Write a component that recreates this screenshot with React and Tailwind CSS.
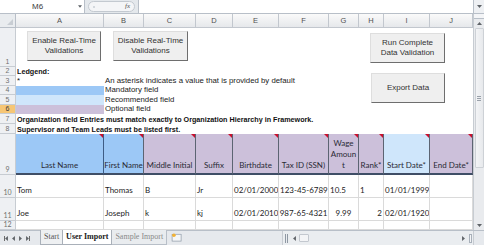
import React from 'react';

// ── Data ─────────────────────────────────────────────────

const LETTERS = [
  { l: 'A', w: 'w-[88px]' },
  { l: 'B', w: 'w-[40px]' },
  { l: 'C', w: 'w-[52px]' },
  { l: 'D', w: 'w-[37px]' },
  { l: 'E', w: 'w-[46px]' },
  { l: 'F', w: 'w-[50px]' },
  { l: 'G', w: 'w-[30px]' },
  { l: 'H', w: 'w-[25px]' },
  { l: 'I', w: 'w-[46px]' },
  { l: 'J', w: 'w-[43px]' },
];

const BLUE = 'bg-[#9cc8f6]';
const LIGHT = 'bg-[#cfe6fb]';
const LAV = 'bg-[#ccc0da]';

const HEADERS = [
  { label: 'Last Name', bg: BLUE, line: 'border-[#3e5c85]' },
  { label: 'First Name', bg: BLUE },
  { label: 'Middle Initial', bg: LAV },
  { label: 'Suffix', bg: LAV },
  { label: 'Birthdate', bg: LAV },
  { label: 'Tax ID (SSN)', bg: LAV },
  { label: 'Wage', bg: LAV, wrap: true },
  { label: 'Rank*', bg: LAV },
  { label: 'Start Date*', bg: LIGHT },
  { label: 'End Date*', bg: LAV },
];

const ROWS = [
  {
    n: 10,
    h: 'h-[23px]',
    cells: [
      ['Tom'], ['Thomas'], ['B'], ['Jr'], ['02/01/2000'], ['123-45-6789'],
      ['10.5'], ['1'], ['01/01/1999'], [''],
    ],
  },
  {
    n: 11,
    h: 'h-[23px]',
    cells: [
      ['Joe'], ['Joseph'], ['k'], ['kj'], ['02/01/2010'], ['987-65-4321', 'justify-center'],
      ['9.99', 'justify-center'], ['2', 'justify-end'], ['02/01/1920'], [''],
    ],
  },
  { n: 12, h: 'h-[9px]', cells: LETTERS.map(() => ['']) },
];

// ── Pieces ───────────────────────────────────────────────

function RowHead({ n, active }) {
  return (
    <div
      className={`w-[16px] shrink-0 flex items-end justify-center pb-[1px] text-[7px] leading-none border-r border-b border-[#c7ccd2] ${
        active ? 'bg-[#f6c675] text-[#3a3a3a]' : 'bg-[#eef0f3] text-[#707070]'
      }`}
    >
      {n}
    </div>
  );
}

function SheetButton({ className, children }) {
  return (
    <button
      className={`absolute flex items-center justify-center text-center text-[8px] leading-[10px] text-[#333] bg-[#efefef] border border-t-[#dedede] border-l-[#dedede] border-r-[#6e6e6e] border-b-[#6e6e6e] ${className}`}
    >
      {children}
    </button>
  );
}

function Tri({ dir = 'down', className = '' }) {
  const pts = {
    down: '0,0 6,0 3,3.5',
    up: '0,3.5 6,3.5 3,0',
    left: '3.5,0 3.5,6 0,3',
    right: '0,0 0,6 3.5,3',
  }[dir];
  const box = dir === 'down' || dir === 'up' ? '0 0 6 3.5' : '0 0 3.5 6';
  return (
    <svg viewBox={box} className={className}>
      <polygon points={pts} fill="#5f6368" />
    </svg>
  );
}

function FormulaBar() {
  return (
    <div className="flex h-[14px] bg-[#e4e8ec] border-b border-[#b8bfc8]">
      <div className="w-[85px] bg-white border-r border-[#b8bfc8] flex items-center">
        <span className="pl-[32px] text-[8px] text-[#3c3c3c]">M6</span>
        <Tri className="ml-auto mr-[2px] w-[4px] h-[3px]" />
      </div>
      <div className="w-[53px] flex items-center pl-[3px]">
        <div className="h-[11px] w-[47px] rounded-full bg-[#f4f5f7] border border-[#c3c9d0] flex items-center justify-between px-[4px]">
          <span className="w-[2px] h-[2px] rounded-full bg-[#c9ced4]" />
          <span className="text-[7px] italic font-['Liberation_Serif',serif] text-[#555]">fx</span>
        </div>
      </div>
      <div className="flex-1 bg-white border-l border-[#b8bfc8]" />
      <div className="w-[11px] bg-[#eef0f3] border-l border-[#b8bfc8] flex items-center justify-center">
        <Tri className="w-[5px] h-[3px]" />
      </div>
    </div>
  );
}

function ColumnHeads() {
  return (
    <div className="flex h-[14px]">
      <div className="w-[16px] shrink-0 bg-[#e9ecef] border-r border-b border-[#b8bfc8] flex items-end justify-end p-[2px]">
        <svg viewBox="0 0 6 6" className="w-[6px] h-[6px]">
          <polygon points="6,0 6,6 0,6" fill="#c8cdd3" />
        </svg>
      </div>
      {LETTERS.map((c) => (
        <div
          key={c.l}
          className={`${c.w} shrink-0 flex items-center justify-center text-[7.5px] text-[#505050] bg-gradient-to-b from-[#fafafa] to-[#e6e8eb] border-r border-b border-[#c2c7ce]`}
        >
          {c.l}
        </div>
      ))}
    </div>
  );
}

function TextRow({ n, h, active, a, aBg, rest, bold }) {
  return (
    <div className={`flex ${h}`}>
      <RowHead n={n} active={active} />
      <div className={`w-[88px] shrink-0 flex items-end pb-[1px] pl-[1px] ${aBg || ''}`}>
        {a && (
          <span
            className={`leading-none whitespace-nowrap text-[#111] ${bold ? 'font-bold text-[7.2px]' : 'text-[7.8px]'}`}
          >
            {a}
          </span>
        )}
      </div>
      <div className="flex-1 flex items-end pb-[1px] pl-[1px]">
        {rest && <span className="text-[7.8px] leading-none whitespace-nowrap text-[#222]">{rest}</span>}
      </div>
    </div>
  );
}

function HeaderRow() {
  return (
    <div className="flex h-[41px] font-['Lato',sans-serif]">
      <RowHead n={9} />
      {HEADERS.map((hd, i) => (
        <div
          key={hd.label}
          className={`${LETTERS[i].w} ${hd.bg} relative shrink-0 flex items-end justify-center text-center pb-[2px] text-[8px] leading-[11px] text-[#2a2a35] whitespace-nowrap overflow-hidden border-r ${hd.line || 'border-[#5c6472]'} border-b-2 border-b-[#3f4e66]`}
        >
          {hd.wrap ? (
            <span>
              Wage
              <br />
              Amoun
              <br />t
            </span>
          ) : (
            hd.label
          )}
          <span className="absolute top-0 right-0 w-0 h-0 border-l-[4px] border-l-transparent border-t-[4px] border-t-[#c8102e]" />
        </div>
      ))}
    </div>
  );
}

function DataRow({ row }) {
  return (
    <div className={`flex ${row.h} font-['Lato',sans-serif]`}>
      <RowHead n={row.n} />
      {row.cells.map(([v, align], i) => (
        <div
          key={i}
          className={`${LETTERS[i].w} shrink-0 flex items-end ${align || 'justify-start'} px-[1px] pb-[3px] text-[8px] leading-none whitespace-nowrap overflow-hidden text-[#1c1c1c] border-r border-b border-[#dadada]`}
        >
          {v}
        </div>
      ))}
    </div>
  );
}

function VScroll() {
  return (
    <div className="w-[11px] shrink-0 bg-[#e9ebee] border-l border-[#c7ccd2] flex flex-col items-center">
      <div className="w-full h-[5px] border-b border-[#b8bfc8] bg-[#f4f5f7]" />
      <div className="h-[9px] flex items-center">
        <Tri dir="up" className="w-[5px] h-[3px]" />
      </div>
      <div className="w-[9px] h-[140px] bg-gradient-to-r from-[#f3f4f6] to-[#e7e9ec] border border-[#cdd1d6] rounded-[1px] flex items-center justify-center">
        <div className="flex flex-col gap-[1px]">
          <span className="w-[4px] h-[1px] bg-[#9aa1aa]" />
          <span className="w-[4px] h-[1px] bg-[#9aa1aa]" />
          <span className="w-[4px] h-[1px] bg-[#9aa1aa]" />
        </div>
      </div>
      <div className="flex-1" />
      <div className="h-[9px] flex items-center">
        <Tri className="w-[5px] h-[3px]" />
      </div>
    </div>
  );
}

function TabBar() {
  return (
    <div className="flex h-[15px] bg-[#e6e9ed] border-t border-[#b8bfc8] font-['Liberation_Serif',serif]">
      {/* Navegación */}
      <div className="w-[40px] shrink-0 flex items-center gap-[4px] pl-[4px]">
        <span className="flex items-center">
          <span className="w-[1px] h-[5px] bg-[#6b6b6b]" />
          <Tri dir="left" className="w-[3px] h-[5px]" />
        </span>
        <Tri dir="left" className="w-[3px] h-[5px]" />
        <Tri dir="right" className="w-[3px] h-[5px]" />
        <span className="flex items-center">
          <Tri dir="right" className="w-[3px] h-[5px]" />
          <span className="w-[1px] h-[5px] bg-[#6b6b6b]" />
        </span>
      </div>

      {/* Hojas */}
      <div className="flex items-stretch -mt-[1px]">
        <div className="px-[3px] flex items-center text-[8px] text-[#555] bg-[#eef0f2] border-x border-b border-[#a9b0b9]">
          Start
        </div>
        <div className="px-[3px] flex items-center text-[8px] font-bold text-[#1a1a1a] bg-white border-r border-b border-[#a9b0b9]">
          User Import
        </div>
        <div className="px-[3px] flex items-center text-[8px] text-[#8a8a8a] bg-[#e9ecef] border-r border-b border-[#b8bfc8]">
          Sample Import
        </div>
        <div className="w-[20px] flex items-center justify-center">
          <svg viewBox="0 0 14 10" className="w-[13px] h-[9px]">
            <rect x="1" y="1.5" width="10" height="7.5" fill="#f4f6f8" stroke="#8f9aa6" strokeWidth="0.8" />
            <path d="M3 1.5 L11 1.5" stroke="#b7c2cd" strokeWidth="0.8" />
            <circle cx="3" cy="2.5" r="2" fill="#f2b234" />
          </svg>
        </div>
      </div>

      <div className="flex-1" />

      {/* Scroll horizontal */}
      <div className="w-[191px] shrink-0 flex items-center bg-[#eaedf0] border-l border-[#c7ccd2]">
        <span className="ml-[2px] flex gap-[1px]">
          <span className="w-[1px] h-[9px] bg-[#8f98a3]" />
          <span className="w-[1px] h-[9px] bg-[#8f98a3]" />
        </span>
        <Tri dir="left" className="ml-[5px] w-[3px] h-[5px]" />
        <span className="ml-[3px] w-[10px] h-[8px] bg-[#f3f4f6] border border-[#c3c8cf] rounded-[1px]" />
        <span className="flex-1" />
        <Tri dir="right" className="mr-[4px] w-[3px] h-[5px]" />
        <span className="mr-[1px] w-[3px] h-[9px] border border-[#a8b0ba] bg-[#f4f5f7]" />
      </div>
      <div className="w-[11px] shrink-0 bg-[#e6e9ed] border-l border-[#c7ccd2]" />
    </div>
  );
}

// ── App ──────────────────────────────────────────────────

export default function App() {
  return (
    <div className="w-[484px] h-[245px] overflow-hidden bg-white font-['Liberation_Sans',Arial,sans-serif]">
      <FormulaBar />

      <div className="flex h-[216px]">
        <div className="relative w-[473px] shrink-0 overflow-hidden">
          <ColumnHeads />

          {/* Fila 1 con botones */}
          <div className="flex h-[39px]">
            <RowHead n={1} />
            <div className="flex-1" />
          </div>

          <TextRow n={2} h="h-[9px]" a="Ledgend:" bold />
          <TextRow n={3} h="h-[10px]" a="*" rest="An asterisk indicates a value that is provided by default" />
          <TextRow n={4} h="h-[9px]" aBg={BLUE} rest="Mandatory field" />
          <TextRow n={5} h="h-[10px]" aBg={LIGHT} rest="Recommended field" />
          <TextRow n={6} h="h-[9px]" aBg={LAV} rest="Optional field" active />
          <TextRow
            n={7}
            h="h-[10px]"
            a="Organization field Entries must match exactly to Organization Hierarchy in Framework."
            bold
          />
          <TextRow n={8} h="h-[10px]" a="Supervisor and Team Leads must be listed first." bold />

          <HeaderRow />
          {ROWS.map((r) => (
            <DataRow key={r.n} row={r} />
          ))}

          {/* Botones flotantes */}
          <SheetButton className="left-[27px] top-[17px] w-[74px] h-[30px]">
            Enable Real-Time
            <br />
            Validations
          </SheetButton>
          <SheetButton className="left-[113px] top-[17px] w-[75px] h-[30px]">
            Disable Real-Time
            <br />
            Validations
          </SheetButton>
          <SheetButton className="left-[370px] top-[19px] w-[75px] h-[30px]">
            Run Complete
            <br />
            Data Validation
          </SheetButton>
          <SheetButton className="left-[371px] top-[59px] w-[74px] h-[30px]">Export Data</SheetButton>
        </div>
        <VScroll />
      </div>

      <TabBar />
    </div>
  );
}
